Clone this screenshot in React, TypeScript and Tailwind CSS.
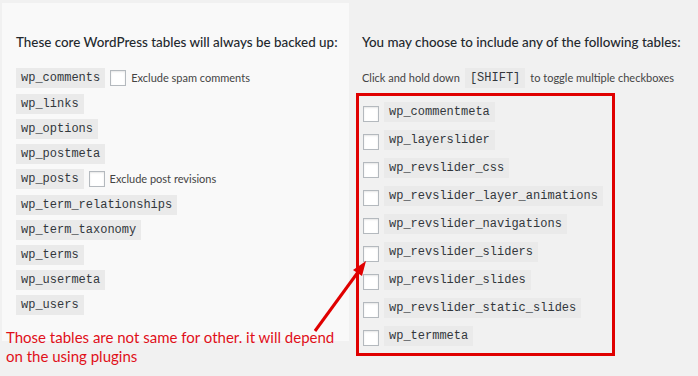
import React from "react";

// ====== Data ======
const coreTables: { name: string; exclude?: string }[] = [
  { name: "wp_comments", exclude: "Exclude spam comments" },
  { name: "wp_links" },
  { name: "wp_options" },
  { name: "wp_postmeta" },
  { name: "wp_posts", exclude: "Exclude post revisions" },
  { name: "wp_term_relationships" },
  { name: "wp_term_taxonomy" },
  { name: "wp_terms" },
  { name: "wp_usermeta" },
  { name: "wp_users" },
];

const extraTables = [
  "wp_commentmeta",
  "wp_layerslider",
  "wp_revslider_css",
  "wp_revslider_layer_animations",
  "wp_revslider_navigations",
  "wp_revslider_sliders",
  "wp_revslider_slides",
  "wp_revslider_static_slides",
  "wp_termmeta",
];

const sans = "font-['Segoe_UI','Lato','Noto_Sans',sans-serif]";

// ====== Small pieces ======
const Code: React.FC<{ children: React.ReactNode }> = ({ children }) => (
  <code className="inline-flex h-5 items-center bg-[#eaeaea] px-[5px] font-['Consolas','Liberation_Mono',monospace] text-[12px] text-[#32373c]">
    {children}
  </code>
);

const Box: React.FC = () => (
  <span className="block h-4 w-4 shrink-0 border border-[#b4b9be] bg-white shadow-[inset_0_1px_2px_rgba(0,0,0,0.1)]" />
);

export default function App() {
  return (
    <div className={`relative flex h-[376px] w-[698px] overflow-hidden bg-[#f1f1f1] ${sans}`}>
      {/* left panel */}
      <div className="ml-[2px] mt-[3px] h-[338px] w-[347px] shrink-0 bg-[#f9f9f9] pl-[14px] pt-[29px]">
        <h3 className="whitespace-nowrap text-[13.4px] font-medium leading-5 text-[#23282d]">
          These core WordPress tables will always be backed up:
        </h3>
        <ul className="mt-4 flex flex-col gap-[5px]">
          {coreTables.map((t) => (
            <li key={t.name} className={`flex items-start ${t.exclude ? "h-[21px]" : "h-5"}`}>
              <Code>{t.name}</Code>
              {t.exclude && (
                <label className="ml-[5px] mt-[2px] flex items-center gap-[5px] text-[11px] text-[#444]">
                  <Box />
                  {t.exclude}
                </label>
              )}
            </li>
          ))}
        </ul>
      </div>

      {/* right column */}
      <div className="ml-[13px] shrink-0 pt-[32px]">
        <h3 className="whitespace-nowrap text-[13.4px] font-medium leading-5 text-[#23282d]">
          You may choose to include any of the following tables:
        </h3>
        <p className="mt-4 flex h-5 items-center gap-[5px] whitespace-nowrap text-[11px] text-[#444]">
          Click and hold down <Code>[SHIFT]</Code> to toggle multiple checkboxes
        </p>
        <ul className="-ml-[6px] mt-[5px] flex w-[259px] flex-col gap-2 border-[3px] border-[#e00000] pb-[7px] pl-1 pt-[6px]">
          {extraTables.map((t) => (
            <li key={t} className="flex h-5 items-start gap-[5px]">
              <span className="mt-1">
                <Box />
              </span>
              <Code>{t}</Code>
            </li>
          ))}
        </ul>
      </div>

      {/* annotation */}
      <p className="absolute left-[6px] top-[328px] text-[15px] leading-[19px] text-[#e0101a]">
        Those tables are not same for other. it will depend
        <br />
        on the using plugins
      </p>
      <svg className="absolute left-0 top-0" width="698" height="376">
        <line x1="315" y1="331" x2="361" y2="268" stroke="#e00000" strokeWidth="3" />
        <polygon points="366,261 353,270 362,276" fill="#e00000" />
      </svg>
    </div>
  );
}
